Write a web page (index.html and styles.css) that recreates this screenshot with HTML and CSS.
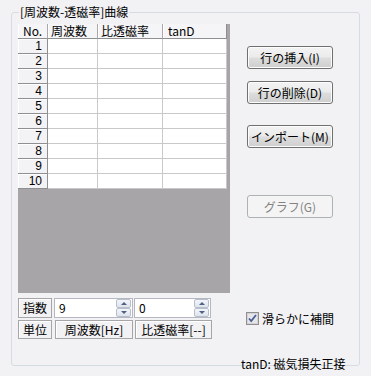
FILE: index.html
```html
<!DOCTYPE html>
<html lang="ja">
<head>
<meta charset="utf-8">
<title>周波数-透磁率曲線</title>
<link rel="stylesheet" href="styles.css">
</head>
<body>
<div class="group">
  <span class="group-title">[周波数-透磁率]曲線</span>
  <div class="left">
    <div class="grid">
      <table class="sheet">
        <colgroup><col class="c-no"><col class="c-f"><col class="c-mu"><col class="c-tan"></colgroup>
        <thead>
          <tr><th class="hno">No.</th><th>周波数</th><th>比透磁率</th><th class="htan">tanD</th></tr>
        </thead>
        <tbody>
          <tr><td class="rh">1</td><td></td><td></td><td></td></tr>
          <tr><td class="rh">2</td><td></td><td></td><td></td></tr>
          <tr><td class="rh">3</td><td></td><td></td><td></td></tr>
          <tr><td class="rh">4</td><td></td><td></td><td></td></tr>
          <tr><td class="rh">5</td><td></td><td></td><td></td></tr>
          <tr><td class="rh">6</td><td></td><td></td><td></td></tr>
          <tr><td class="rh">7</td><td></td><td></td><td></td></tr>
          <tr><td class="rh">8</td><td></td><td></td><td></td></tr>
          <tr><td class="rh">9</td><td></td><td></td><td></td></tr>
          <tr><td class="rh">10</td><td></td><td></td><td></td></tr>
        </tbody>
      </table>
    </div>
    <div class="params">
      <div class="prow">
        <span class="lbl">指数</span>
        <div class="spin spin-a">
          <span class="val">9</span>
          <span class="arrows"><span class="arr up"></span><span class="arr dn"></span></span>
        </div>
        <div class="spin spin-b">
          <span class="val">0</span>
          <span class="arrows"><span class="arr up"></span><span class="arr dn"></span></span>
        </div>
      </div>
      <div class="prow">
        <span class="lbl">単位</span>
        <span class="unit unit-a">周波数[Hz]</span>
        <span class="unit unit-b">比透磁率[--]</span>
      </div>
    </div>
  </div>
  <div class="right">
    <button class="btn b1">行の挿入(I)</button>
    <button class="btn b2">行の削除(D)</button>
    <button class="btn b3">インポート(M)</button>
    <button class="btn b4" disabled>グラフ(G)</button>
    <label class="check">
      <svg class="cbox" width="13" height="13" viewBox="0 0 13 13">
        <rect x="0.5" y="0.5" width="12" height="12" fill="#f4f4f4" stroke="#8e8f8f"/>
        <rect x="1.5" y="1.5" width="10" height="10" fill="#e6e6e8" stroke="#d4d4d6"/>
        <path d="M3 6.5 L5.2 9 L10 3" fill="none" stroke="#4a5f97" stroke-width="1.8"/>
      </svg>
      <span>滑らかに補間</span>
    </label>
    <div class="note">tanD: 磁気損失正接</div>
  </div>
</div>
</body>
</html>
```
FILE: styles.css
```css
* { box-sizing: border-box; }
html, body { margin: 0; padding: 0; }
body {
  width: 371px;
  height: 376px;
  background: #f2f1f4;
  font-family: "Noto Sans CJK JP", "Noto Sans", sans-serif;
  font-size: 12px;
  color: #000;
  overflow: hidden;
}
.group {
  position: relative;
  margin: 12px 0 0 11px;
  width: 349px;
  height: 354px;
  border: 1px solid #d5dde3;
  border-radius: 3px;
  display: flex;
  padding: 11px 0 0 6px;
  gap: 17px;
}
.group-title {
  position: absolute;
  left: 7px;
  top: -9px;
  padding: 0 1px;
  line-height: 15px;
  background: #f2f1f4;
}
.left { width: 212px; display: flex; flex-direction: column; }
.grid {
  width: 212px;
  height: 269px;
  background: #a7a5a8;
}
.sheet {
  border-collapse: separate;
  border-spacing: 0;
  table-layout: fixed;
  width: 209px;
}
.c-no { width: 30px; }
.c-f { width: 50px; }
.c-mu { width: 65px; }
.c-tan { width: 64px; }
.sheet th, .sheet td {
  padding: 0 0 0 3px;
  line-height: 14px;
  height: 15px;
  font-weight: normal;
  text-align: left;
  background: #fff;
  border-right: 1px solid #c9c8cb;
  border-bottom: 1px solid #c9c8cb;
  white-space: nowrap;
}
.sheet th {
  background: #f5f4f7;
  border-right: 1px solid #a9a8ab;
  border-bottom: 1px solid #8f8e91;
  box-shadow: inset 1px 0 #fff;
}
.sheet th.hno { padding-left: 5px; }
.sheet th.htan { padding-left: 5px; border-right-color: #8f8e91; }
.sheet td.rh {
  background: #f3f2f5;
  border-right: 1px solid #8f8e91;
  border-bottom: 1px solid #8f8e91;
  text-align: right;
  padding: 0 5px 0 0;
  box-shadow: inset 1px 1px #fff;
  font-family: "Liberation Sans", Arial, sans-serif;
  font-size: 12px;
}
.params {
  margin-top: 5px;
  display: flex;
  flex-direction: column;
  gap: 2px;
}
.prow { display: flex; gap: 1px; height: 20px; }
.prow + .prow { height: 19px; }
.lbl {
  width: 34px;
  border: 1px solid #a6a5a8;
  box-shadow: inset 1px 1px #fff;
  background: #f2f1f4;
  text-align: center;
  line-height: 17px;
}
.spin {
  position: relative;
  height: 20px;
  border: 1px solid #b5b8c0;
  background: #fff;
  display: flex;
  align-items: center;
  justify-content: space-between;
  padding: 0 1px 0 4px;
}
.spin-a { width: 79px; margin-left: 1px; }
.spin-b { width: 77px; }
.val { line-height: 16px; }
.arrows {
  width: 15px;
  height: 18px;
  display: flex;
  flex-direction: column;
}
.arr {
  position: relative;
  flex: 1;
  border: 1px solid #b7bfcc;
  border-radius: 2px;
  background: linear-gradient(#f3f5f9, #dfe4ec);
}
.arr::after {
  content: "";
  position: absolute;
  left: 4px;
  top: 2px;
  border-left: 3px solid transparent;
  border-right: 3px solid transparent;
}
.arr.up::after { border-bottom: 3px solid #4d6185; }
.arr.dn::after { border-top: 3px solid #4d6185; }
.unit {
  border: 1px solid #a6a5a8;
  box-shadow: inset 1px 1px #fff;
  background: #f2f1f4;
  text-align: center;
  line-height: 17px;
  white-space: nowrap;
}
.unit-a { width: 78px; margin-left: 2px; }
.unit-b { width: 77px; margin-left: 1px; }
.right {
  width: 112px;
  display: flex;
  flex-direction: column;
  align-items: flex-start;
}
.btn {
  width: 86px;
  height: 23px;
  padding: 0;
  border: 1px solid #707070;
  border-radius: 3px;
  background: linear-gradient(#f3f3f3 0%, #ebebeb 48%, #dddddd 52%, #cfcfcf 100%);
  box-shadow: inset 0 0 0 1px #fcfcfc;
  font: inherit;
  color: #000;
  line-height: 21px;
  text-align: center;
}
.b1 { margin-top: 22px; }
.b2 { margin-top: 12px; }
.b3 { margin-top: 21px; }
.b4 {
  margin-top: 47px;
  border-color: #adb2b5;
  background: #f4f4f4;
  box-shadow: none;
  color: #838383;
}
.check {
  margin-top: 93px;
  margin-left: -1px;
  display: flex;
  align-items: center;
  gap: 3px;
  line-height: 15px;
}
.cbox { display: block; }
.note {
  margin-top: 31px;
  margin-left: -6px;
  line-height: 14px;
}
```
